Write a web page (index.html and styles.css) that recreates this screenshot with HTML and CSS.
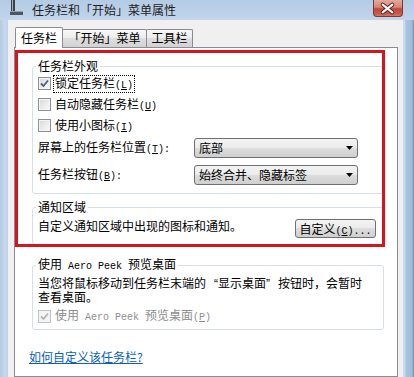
FILE: index.html
```html
<!DOCTYPE html>
<html lang="zh-CN">
<head>
<meta charset="utf-8">
<title>任务栏和「开始」菜单属性</title>
<link rel="stylesheet" href="styles.css">
</head>
<body>
<div class="window">
  <div class="titlebar">
    <svg class="app-icon" width="13" height="16" viewBox="0 0 13 16">
      <rect x="1" y="0" width="4" height="12" fill="#3c4249"/>
      <rect x="2" y="0" width="1" height="12" fill="#a3acb6"/>
      <rect x="0" y="11" width="13" height="4" fill="#4b5864"/>
      <rect x="0" y="11" width="13" height="1" fill="#93a2ae"/>
    </svg>
    <span class="title">任务栏和「开始」菜单属性</span>
    <div class="close">
      <svg width="30" height="17" viewBox="0 0 30 17">
        <path d="M10 4.5 L20 12.5 M20 4.5 L10 12.5" stroke="#5a1f19" stroke-width="4" stroke-linecap="round" fill="none"/>
        <path d="M10 4.5 L20 12.5 M20 4.5 L10 12.5" stroke="#ffffff" stroke-width="2.2" stroke-linecap="round" fill="none"/>
      </svg>
    </div>
  </div>
  <div class="client">
    <div class="tabs">
      <div class="tab active">任务栏</div>
      <div class="tab tab-start">「开始」菜单</div>
      <div class="tab tab-tools">工具栏</div>
    </div>
    <div class="panel">
      <fieldset class="group group-look">
        <legend>任务栏外观</legend>
        <div class="check-row">
          <span class="cb"><svg width="11" height="11" viewBox="0 0 11 11"><path d="M2 5.5 L4.5 8 L9 2.5" stroke="#4a5d86" stroke-width="1.8" fill="none"/></svg></span>
          <span class="lbl focus">锁定任务栏<span class="m">(<u>L</u>)</span></span>
        </div>
        <div class="check-row">
          <span class="cb"></span>
          <span class="lbl">自动隐藏任务栏<span class="m">(<u>U</u>)</span></span>
        </div>
        <div class="check-row">
          <span class="cb"></span>
          <span class="lbl">使用小图标<span class="m">(<u>I</u>)</span></span>
        </div>
        <div class="select-grid">
          <span>屏幕上的任务栏位置<span class="m">(<u>T</u>):</span></span>
          <div class="select"><span>底部</span><svg width="7" height="4" viewBox="0 0 7 4"><polygon points="0,0 7,0 3.5,4" fill="#000"/></svg></div>
          <span>任务栏按钮<span class="m">(<u>B</u>):</span></span>
          <div class="select"><span>始终合并、隐藏标签</span><svg width="7" height="4" viewBox="0 0 7 4"><polygon points="0,0 7,0 3.5,4" fill="#000"/></svg></div>
        </div>
      </fieldset>
      <fieldset class="group group-notify">
        <legend>通知区域</legend>
        <div class="notify-row">
          <span>自定义通知区域中出现的图标和通知。</span>
          <div class="button">自定义<span class="m">(<u>C</u>)...</span></div>
        </div>
      </fieldset>
      <fieldset class="group group-peek">
        <legend>使用<span class="m"> Aero Peek </span>预览桌面</legend>
        <div class="desc">当您将鼠标移动到任务栏末端的<span class="q ql">“</span>显示桌面<span class="q qr">”</span>按钮时，会暂时<br>查看桌面。</div>
        <div class="check-row disabled">
          <span class="cb"><svg width="11" height="11" viewBox="0 0 11 11"><path d="M2 5.5 L4.5 8 L9 2.5" stroke="#b4b4b4" stroke-width="1.8" fill="none"/></svg></span>
          <span class="lbl">使用<span class="m"> Aero Peek </span>预览桌面<span class="m">(<u>P</u>)</span></span>
        </div>
      </fieldset>
      <a class="help-link" href="#">如何自定义该任务栏?</a>
      <div class="highlight"></div>
    </div>
  </div>
</div>
</body>
</html>
```
FILE: styles.css
```css
* { box-sizing: border-box; }
html, body { margin: 0; padding: 0; }
body {
  width: 414px;
  height: 377px;
  overflow: hidden;
  font-family: "Noto Sans CJK SC", "Noto Sans", sans-serif;
  font-size: 12px;
  line-height: 14px;
  color: #000;
  background: #b9d0e9;
}
.window {
  width: 414px;
  height: 377px;
  display: flex;
  flex-direction: column;
  background: linear-gradient(90deg, #b3cae3 0, #c9d9ec 5px, #bcd2ea 8px, #bcd2ea 403px, #d7e5f3 404px, #a9c4e2 406px, #9fbcdc 412px, #6f8aa8 414px);
}
.titlebar {
  height: 20px;
  flex: none;
  display: flex;
  align-items: center;
  padding-left: 10px;
  background: linear-gradient(#b4cbe5, #c1d5eb);
}
.app-icon { flex: none; align-self: flex-start; }
.title { margin-left: 9px; font-size: 12px; color: #1e1e1e; }
.close {
  margin-left: auto;
  margin-right: 11px;
  align-self: flex-start;
  width: 30px;
  height: 17px;
  border: 1px solid #7a3a33;
  border-top: none;
  border-radius: 0 0 4px 4px;
  background: linear-gradient(#e4a99f 0, #d88475 45%, #c2473b 55%, #c9584b 85%, #d7776a 100%);
  display: flex;
}
.close svg { margin-left: -1px; }
.client {
  flex: 1;
  min-height: 0;
  display: flex;
  flex-direction: column;
  margin: 0 11px 0 8px;
  padding: 7px 5px 0 6px;
  background: #f0f0f0;
}
.tabs {
  height: 20px;
  flex: none;
  display: flex;
  align-items: flex-end;
  padding-left: 1px;
}
.tab {
  height: 18px;
  border: 1px solid #898c95;
  border-bottom: none;
  border-radius: 2px 2px 0 0;
  background: linear-gradient(#f7f7f7 0, #ececec 50%, #dedede 50%, #d2d2d2 100%);
  text-align: center;
  line-height: 16px;
  margin-left: -1px;
}
.tab.active {
  width: 48px;
  height: 21px;
  margin-left: 0;
  margin-bottom: -1px;
  background: #fff;
  line-height: 19px;
  position: relative;
  z-index: 1;
}
.tab-start { width: 85px; }
.tab-tools { width: 47px; }
.panel {
  flex: 1;
  position: relative;
  border: 1px solid #898c95;
  background: #fff;
  padding: 11px 13px 0 17px;
}
.group {
  margin: 0;
  min-width: 0;
  border: 1px solid #d5dfe5;
  border-radius: 3px;
  padding: 0 6px 8px 5px;
}
.group legend {
  padding: 0 2px;
  margin-left: -2px;
  line-height: 14px;
}
.check-row {
  height: 21px;
  display: flex;
  align-items: center;
  gap: 3px;
}
.cb {
  flex: none;
  width: 13px;
  height: 13px;
  border: 1px solid #8e8f8f;
  background: linear-gradient(135deg, #d6d6d6 0, #ececec 55%, #fafafa 100%);
  box-shadow: inset 0 0 0 1px #f4f4f4;
  display: flex;
  align-items: center;
  justify-content: center;
}
.lbl { padding: 0 1px; line-height: 13px; }
.focus { outline: 1px dotted #000; }
.m { font-family: "Liberation Mono", monospace; font-size: 10px; }
.select-grid {
  display: grid;
  grid-template-columns: 156px 164px;
  grid-auto-rows: 20px;
  row-gap: 7px;
  align-items: center;
  margin-top: 2px;
}
.select {
  height: 20px;
  border: 1px solid #707070;
  border-radius: 3px;
  background: linear-gradient(#f3f3f3 0, #ebebeb 50%, #dddddd 50%, #cfcfcf 100%);
  display: flex;
  align-items: center;
  justify-content: space-between;
  padding: 0 4px;
}
.group-notify { margin-top: 6px; padding-bottom: 6px; }
.notify-row {
  display: flex;
  justify-content: space-between;
  align-items: flex-start;
  margin-top: 5px;
}
.button {
  width: 81px;
  height: 19px;
  margin-right: 1px;
  border: 1px solid #707070;
  border-radius: 3px;
  background: linear-gradient(#f3f3f3 0, #ebebeb 50%, #dddddd 50%, #cfcfcf 100%);
  text-align: center;
  line-height: 17px;
}
.group-peek { margin-top: 12px; padding-bottom: 3px; }
.desc {
  margin-top: 4px;
  font-family: "Liberation Sans", "Noto Sans CJK SC", sans-serif;
  line-height: 13.5px;
}
.q { display: inline-block; width: 12px; }
.ql { text-align: right; }
.qr { text-align: left; }
.group-peek .check-row { height: 20px; margin-top: 1px; }
.disabled { color: #8d8d8d; }
.disabled .cb {
  border-color: #c2c2c2;
  background: #f4f4f4;
  box-shadow: none;
}
.help-link {
  display: inline-block;
  margin-top: 20px;
  margin-left: -3px;
  color: #0b62bd;
  text-decoration: underline;
}
.highlight {
  position: absolute;
  left: 0;
  top: 2px;
  width: 370px;
  height: 197px;
  border: 3px solid #d3161d;
  pointer-events: none;
}
```
